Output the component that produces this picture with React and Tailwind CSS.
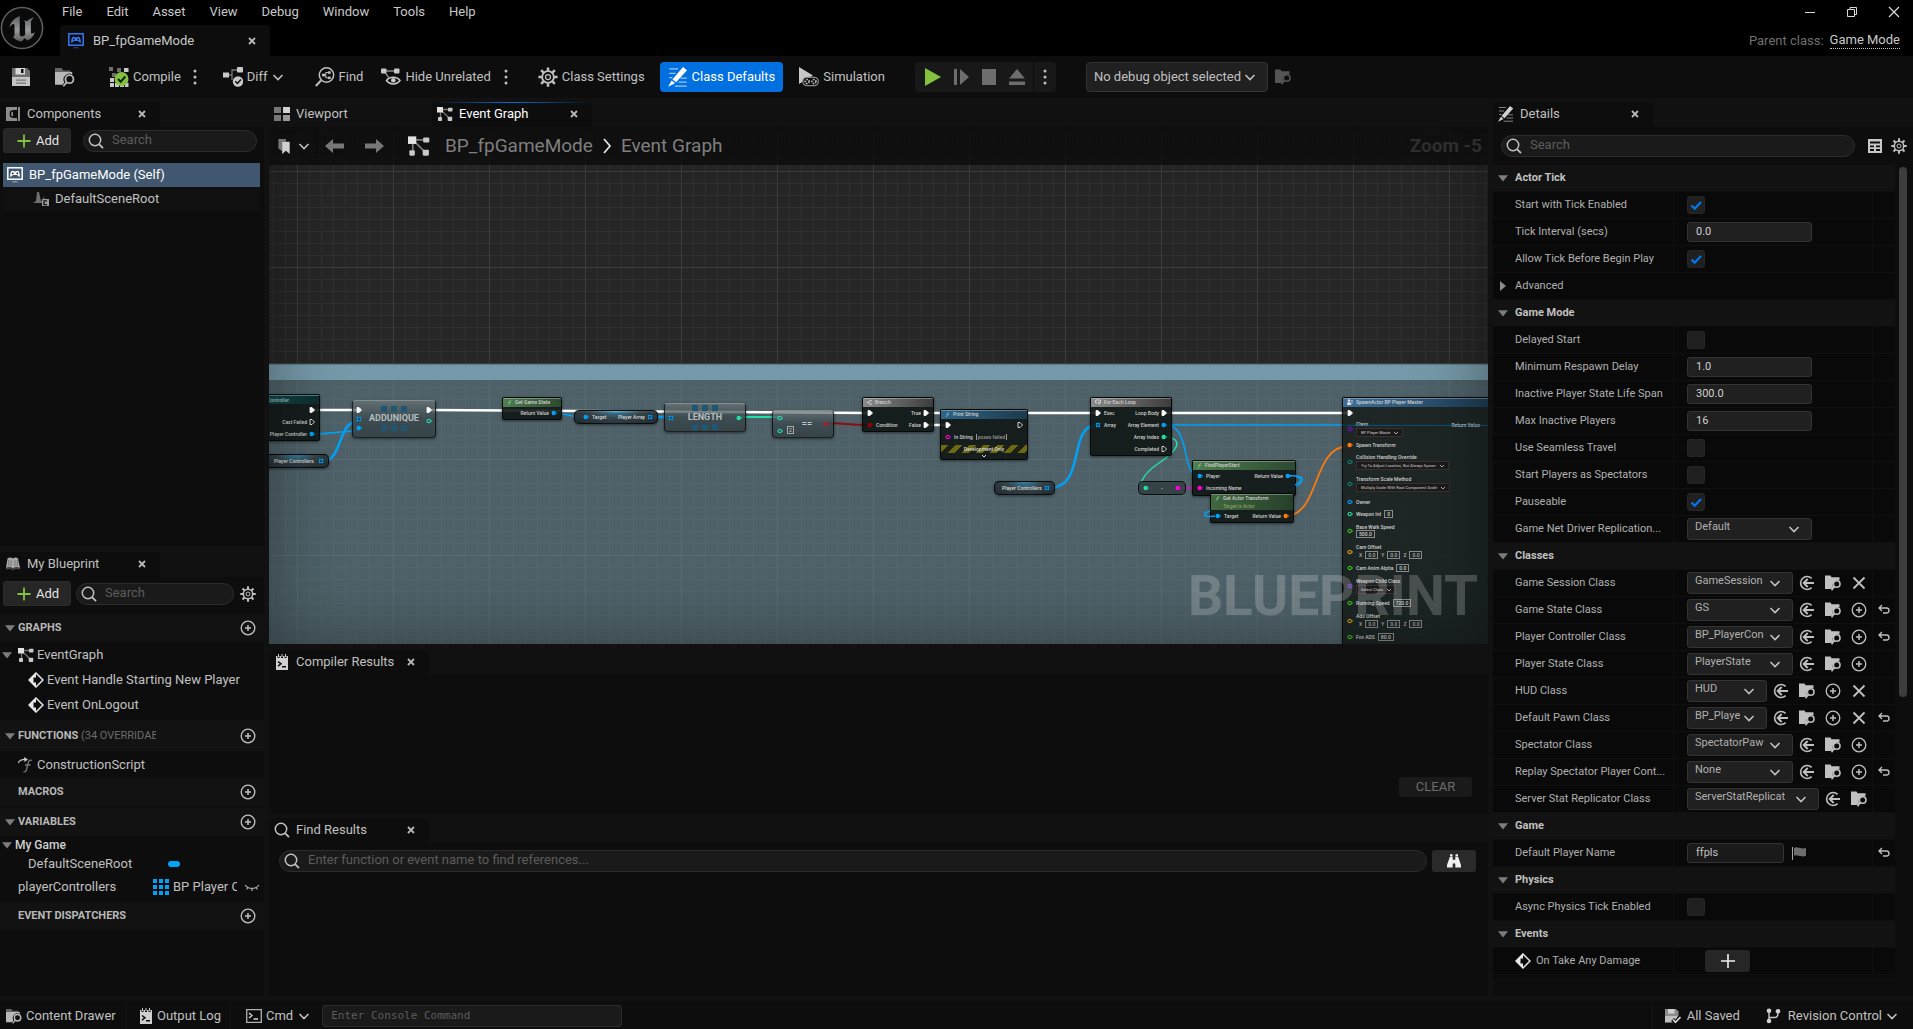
import React from "react";

/* ---------- icons ---------- */

const Svg = ({ s = 16, vb = "0 0 16 16", className = "", children }) => (
  <svg width={s} height={s} viewBox={vb} fill="none" className={`shrink-0 ${className}`} aria-hidden="true">
    {children}
  </svg>
);

const Chevron = ({ className = "text-[#c0c0c0]" }) => (
  <Svg s={12} vb="0 0 12 12" className={className}>
    <path d="M1.5 4l4.500 4.500L10.500 4" stroke="currentColor" strokeWidth="1.600" />
  </Svg>
);

const CloseX = () => (
  <Svg s={8} vb="0 0 8 8" className="text-[#b8b8b8]">
    <path d="M1 1l6 6M7 1L1 7" stroke="currentColor" strokeWidth="1.800" />
  </Svg>
);

const SearchIcon = ({ s = 16 }) => (
  <Svg s={s} className="text-[#c0c0c0]">
    <circle cx="7" cy="7" r="5.700" stroke="currentColor" strokeWidth="1.500" />
    <path d="M11 11.200l4 4" stroke="currentColor" strokeWidth="1.700" />
  </Svg>
);

const GearIcon = ({ s = 16 }) => (
  <Svg s={s} className="text-[#c0c0c0]">
    <circle cx="8" cy="8" r="4.700" stroke="currentColor" strokeWidth="1.500" />
    <circle cx="8" cy="8" r="2" stroke="currentColor" strokeWidth="1" />
    <g stroke="currentColor" strokeWidth="2">
      <path d="M8 .3v2.800M8 12.900v2.800M.3 8h2.800M12.900 8h2.800M2.500 2.500l2 2M11.500 11.500l2 2M13.500 2.500l-2 2M4.500 11.500l-2 2" />
    </g>
  </Svg>
);

const PlusCircle = ({ s = 16 }) => (
  <Svg s={s} className="text-[#c0c0c0]">
    <circle cx="8" cy="8" r="6.800" stroke="currentColor" strokeWidth="1.300" />
    <path d="M8 5v6M5 8h6" stroke="currentColor" strokeWidth="1.500" />
  </Svg>
);

const GamepadMonitor = ({ className }) => (
  <Svg s={16} className={className}>
    <rect x=".8" y=".8" width="14.400" height="11.400" stroke="currentColor" strokeWidth="1.500" />
    <path d="M3.200 9.800c0-3.600.6-6 2.100-6 .8 0 1 .7 2.700.7s1.900-.7 2.700-.7c1.500 0 2.100 2.400 2.100 6-1.200.4-1.700-1.600-2.800-1.900H6c-1.100.3-1.600 2.300-2.800 1.900z" fill="currentColor" />
    <circle cx="5.700" cy="6.300" r=".9" fill="#10131a" />
    <circle cx="10.300" cy="6.300" r=".9" fill="#10131a" />
    <path d="M4.500 15.200c1-1.400 6-1.400 7 0z" fill="currentColor" opacity=".55" />
  </Svg>
);

const BrowseIcon = ({ s = 18, className = "text-[#b8b8b8]" }) => (
  <Svg s={s} vb="0 0 18 18" className={className}>
    <path d="M0 1h6l1.500 2.200H14V5H0z" fill="currentColor" opacity=".5" />
    <path d="M0 4.500h15.500v2.300a5.200 5.200 0 0 0-7.200 7L7 16H0z" fill="currentColor" />
    <circle cx="13" cy="11" r="3.600" stroke="currentColor" strokeWidth="1.600" />
    <path d="M10.600 13.600L7.500 17.300" stroke="currentColor" strokeWidth="1.600" />
  </Svg>
);

const PickIcon = ({ className = "text-[#c0c0c0]" }) => (
  <Svg s={16} className={className}>
    <path d="M0 .5h5.500l1 1.800h8v3.200a5 5 0 0 0-6.200 7L7.500 13.500 5.500 14H0z" fill="currentColor" />
    <circle cx="11.700" cy="9" r="3.300" stroke="currentColor" strokeWidth="1.600" />
    <path d="M9.500 11.500L6.500 15.200" stroke="currentColor" strokeWidth="1.600" />
  </Svg>
);

const UseIcon = () => (
  <Svg s={16} className="text-[#c0c0c0]">
    <path d="M12.600 3.300A6.500 6.500 0 1 0 12.600 12.700" stroke="currentColor" strokeWidth="1.600" />
    <path d="M4.500 8H15M8.700 4L4.700 8l4 4" stroke="currentColor" strokeWidth="1.900" />
  </Svg>
);

const BigX = () => (
  <Svg s={16} className="text-[#c0c0c0]">
    <path d="M2.500 2.500l11 11M13.500 2.500l-11 11" stroke="currentColor" strokeWidth="1.800" />
  </Svg>
);

const UndoIcon = () => (
  <Svg s={12} vb="0 0 12 12" className="text-[#c0c0c0]">
    <path d="M1 4h7.500a2.500 2.500 0 0 1 0 5H5M4 1L1 4l3 3" stroke="currentColor" strokeWidth="1.300" />
  </Svg>
);

const GraphIcon = ({ s = 16 }) => (
  <Svg s={s} className="text-[#c8c8c8]">
    <path d="M5 3.500h6M3.500 6v5M5 5l6.500 6.500" stroke="#777" strokeWidth="1.300" />
    <rect x="0" y="1" width="6" height="5.500" fill="#e2e2e2" />
    <rect x="11" y="1.800" width="4.500" height="3.700" rx=".8" fill="currentColor" />
    <rect x="1" y="11" width="4" height="4" rx=".8" fill="currentColor" />
    <rect x="10.700" y="10.700" width="4.500" height="4.300" rx=".8" fill="currentColor" />
  </Svg>
);

const PencilLines = ({ s = 16, className = "text-[#d0d0d0]" }) => (
  <Svg s={s} className={className}>
    <path d="M1 1.500h7M1 5h5M1 8.500h2.500M10 8.800h5M8.500 12h6.500M5.500 15.200H15" stroke="currentColor" strokeWidth="1" opacity=".6" />
    <path d="M12 0l3.200 2.500L6.500 12.200l-3-2.300zM2.900 10.800l2.700 2.100L0 15.800z" fill="currentColor" />
  </Svg>
);

const NotepadIcon = () => (
  <Svg s={16} className="text-[#d0d0d0]">
    <path d="M2 2h12v14H2z" fill="currentColor" />
    <path d="M4.500 0v4M8 0v4M11.500 0v4" stroke="#0d0d0d" strokeWidth="2" />
    <path d="M4.500 0v3M8 0v3M11.500 0v3" stroke="currentColor" strokeWidth="1" />
    <path d="M4 7.500l3 2.300-3 2.400M8 12.700h4" stroke="#0d0d0d" strokeWidth="1.500" />
  </Svg>
);

const EventDiamond = () => (
  <Svg s={16} className="text-[#e8e8e8]">
    <path d="M8 1l7 7-7 7-7-7z" stroke="currentColor" strokeWidth="1.500" />
    <path d="M8 1v4.500H5.500v5H8V15L1 8z" fill="currentColor" />
    <path d="M8 5.500l3 2.500-3 2.500z" fill="#0d0d0d" />
  </Svg>
);

const Tri = ({ open = true }) =>
  open ? (
    <Svg s={10} vb="0 0 10 10"><path d="M0 2.200h10L5 8.500z" fill="#7c7c7c" /></Svg>
  ) : (
    <Svg s={10} vb="0 0 10 10"><path d="M2 0v10l6-5z" fill="#8c8c8c" /></Svg>
  );

const Dots = () => (
  <Svg s={16} className="text-[#c0c0c0]">
    <circle cx="8" cy="2" r="1.500" fill="currentColor" />
    <circle cx="8" cy="8" r="1.500" fill="currentColor" />
    <circle cx="8" cy="14" r="1.500" fill="currentColor" />
  </Svg>
);

const LogoMark = () => (
  <Svg s={44} vb="0 0 44 44">
    <defs>
      <linearGradient id="ueLogo" x1="0" y1="0" x2="0" y2="1">
        <stop offset="0" stopColor="#5c5f62" />
        <stop offset=".55" stopColor="#9a9a9a" />
        <stop offset="1" stopColor="#5a5a5a" />
      </linearGradient>
    </defs>
    <circle cx="22" cy="22" r="20.600" fill="#0a0a0a" stroke="#5e6160" strokeWidth="1.500" />
    <path
      d="M20 10c-5 1.500-9.500 6-10.500 11.500 1.600-2.400 3.200-3.600 4.200-3.400.8.200.8 1 .8 2v8.400c0 1.700-.6 2.200-1.700 2 1.800 2.800 5 4.600 8.700 4.900l3.200-3.200 2.800 2.300c4-1.700 6.600-5 7.300-8.600-1.300 1.300-2.600 2-3.300 1.600-.6-.3-.6-1-.6-1.800V15.500c1-1.700 2.300-3.200 3.600-4.200-2.800.5-5.500 2-7.600 4-1-.7-2.200-1-3.300-.9 1.200.7 1.500 1.500 1.500 2.800v11.600c-.8 1-2 1.600-3.200 1.600-1.300 0-2.200-.6-2.200-1.900V14.300c0-2 .1-3 .3-4.300z"
      fill="url(#ueLogo)"
    />
  </Svg>
);

const SaveIcon = () => (
  <Svg s={18} vb="0 0 18 18" className="text-[#c0c0c0]">
    <path d="M0 0h15l3 3v6H0z" fill="currentColor" opacity=".55" />
    <path d="M3.500 0h9.500v6.500H3.500z" fill="#d8d8d8" />
    <path d="M9 1h2.500v4H9z" fill="#0d0d0d" />
    <path d="M0 9h18v9H0z" fill="#c4c4c4" />
    <path d="M4 11.500h10v1.200H4zM4 14.500h10v1.200H4z" fill="#777" />
  </Svg>
);

const CompileIcon = () => (
  <Svg s={20} vb="0 0 20 20">
    <g fill="#6d6d6d">
      <rect width="4" height="4" /><rect x="8" width="4" height="4" y="1" /><rect x="3" y="6" width="4" height="4" />
    </g>
    <g fill="#c8c8c8">
      <rect x="15" y="1" width="4.500" height="4" /><rect x="1" y="11" width="4" height="4" /><rect x="1" y="16" width="4" height="4" />
      <rect x="6" y="16" width="4" height="4" /><rect x="11" y="16" width="4" height="4" /><rect x="16" y="16" width="3.500" height="4" />
    </g>
    <circle cx="12.500" cy="12" r="7" fill="#83c13f" />
    <path d="M9 12l2.700 2.700L16.300 9.500" stroke="#10200a" strokeWidth="2" />
  </Svg>
);

const DiffIcon = () => (
  <Svg s={20} vb="0 0 20 20" className="text-[#c8c8c8]">
    <path d="M5 8h4V3h6M9 8v5" stroke="#777" strokeWidth="1.300" />
    <rect x="0" y="5.500" width="6" height="5" fill="currentColor" />
    <rect x="14" y="0" width="6" height="5.500" rx="1" fill="currentColor" />
    <circle cx="15" cy="14.500" r="5.200" fill="currentColor" />
    <path d="M12.300 14.300l2.100 2.200 3.600-4" stroke="#0d0d0d" strokeWidth="1.500" />
  </Svg>
);

const FindIcon = () => (
  <Svg s={20} vb="0 0 20 20" className="text-[#c0c0c0]">
    <circle cx="11.500" cy="8" r="7.200" stroke="currentColor" strokeWidth="1.500" />
    <path d="M6 13.500L.8 19" stroke="currentColor" strokeWidth="2" />
    <path d="M8.500 8h2.300V5.500h3M10.800 8v2.800h3" stroke="currentColor" strokeWidth="1" />
    <rect x="7" y="6.700" width="3" height="2.700" fill="currentColor" />
    <rect x="13" y="4.300" width="2.700" height="2.500" fill="currentColor" />
    <rect x="13" y="9.600" width="2.700" height="2.500" fill="currentColor" />
  </Svg>
);

const HideIcon = () => (
  <Svg s={20} vb="0 0 20 20" className="text-[#c8c8c8]">
    <path d="M4 4h11M3 4l5 7" stroke="#888" strokeWidth="1.300" />
    <rect x="0" y="1.500" width="5.500" height="5" rx="1" fill="currentColor" />
    <rect x="13" y="1.500" width="5.500" height="5" rx="1" fill="currentColor" />
    <path d="M5.500 13.500c3-4.500 10.500-4.500 13.500 0-3 4.500-10.500 4.500-13.500 0z" fill="#0d0d0d" stroke="currentColor" strokeWidth="1.500" />
    <circle cx="12.300" cy="13.300" r="2.300" fill="currentColor" />
  </Svg>
);

const SimIcon = () => (
  <Svg s={20} vb="0 0 20 20" className="text-[#c8c8c8]">
    <path d="M0 0l14 8.500L0 17z" fill="currentColor" />
    <rect x="3.800" y="10.300" width="15.600" height="8.400" rx="4.200" fill="#0d0d0d" stroke="#888" strokeWidth="1.200" />
    <circle cx="8.200" cy="14.500" r="2" stroke="currentColor" strokeWidth="1.500" strokeDasharray="1.500 1" />
    <circle cx="15" cy="14.500" r="2" stroke="currentColor" strokeWidth="1.500" strokeDasharray="1.500 1" />
  </Svg>
);

/* ---------- shared controls ---------- */

const Tab = ({ icon, label, active = false, close = true, className = "w-40" }) => (
  <div className={`relative flex h-[25px] items-center rounded-t-[3px] pb-0.5 pl-[5px] pr-[14px] ${className}`}>
    {active && <div className="absolute inset-x-0 top-0 h-px bg-linear-to-r from-transparent via-[#0070e0] to-transparent" />}
    <span className="flex w-[22px] shrink-0">{icon}</span>
    <span className={`flex-1 whitespace-nowrap text-[13px] leading-4 ${active ? "text-white" : "text-[#c0c0c0]"}`}>{label}</span>
    {close && <button type="button" aria-label={`Close ${label}`}><CloseX /></button>}
  </div>
);

const AddButton = () => (
  <button type="button" className="flex h-[25px] w-[68px] shrink-0 items-center gap-[5px] rounded-[3px] border border-[#2b2b2b] bg-[#262626] pl-[13px] text-[13px] text-[#e4e4e4]">
    <Svg s={14} vb="0 0 14 14"><path d="M7 .5v13M.5 7h13" stroke="#83c13f" strokeWidth="1.800" /></Svg>
    Add
  </button>
);

const SearchBox = ({ label, placeholder = "Search", className = "" }) => (
  <label className={`flex h-[22px] min-w-0 items-center gap-2 rounded-full border border-[#2c2c2c] bg-[#1a1a1a] pl-1 ${className}`}>
    <SearchIcon />
    <input aria-label={label} placeholder={placeholder} className="w-full min-w-0 bg-transparent pb-0.5 text-[13px] leading-4 outline-none placeholder:text-[#5c5c5c]" />
  </label>
);

/* ---------- title bar and toolbar ---------- */

const MENU = ["File", "Edit", "Asset", "View", "Debug", "Window", "Tools", "Help"];

const TitleBar = () => (
  <header className="flex h-14 shrink-0 bg-black">
    <div className="flex w-[60px] items-center"><LogoMark /></div>
    <div className="flex flex-1 flex-col justify-between">
      <nav className="flex h-6 items-center gap-6 pl-0.5">
        {MENU.map((m) => <button key={m} type="button" className="text-[13px] leading-4 text-[#c8c8c8]">{m}</button>)}
      </nav>
      <div className="flex h-[31px] w-[210px] items-center rounded-t-[4px] bg-[#0d0d0d] pl-2 pr-[14px]">
        <GamepadMonitor className="text-[#3478f6]" />
        <span className="ml-[9px] flex-1 text-[13px] leading-4 text-[#c8c8c8]">BP_fpGameMode</span>
        <button type="button" aria-label="Close BP_fpGameMode"><CloseX /></button>
      </div>
    </div>
    <div className="flex flex-col items-end justify-between pb-[7px] pr-[13px]">
      <div className="flex h-6 items-center gap-[30px] text-[#d8d8d8]">
        <button type="button" aria-label="Minimize"><Svg s={12} vb="0 0 12 12"><path d="M1 6.500h10" stroke="currentColor" strokeWidth="1" /></Svg></button>
        <button type="button" aria-label="Restore"><Svg s={12} vb="0 0 12 12"><path d="M1.500 3.500h7v7h-7zM4 3V1.500h6.500v7H9" stroke="currentColor" strokeWidth="1" /></Svg></button>
        <button type="button" aria-label="Close"><Svg s={12} vb="0 0 12 12"><path d="M1 1l10 10M11 1L1 11" stroke="currentColor" strokeWidth="1.300" /></Svg></button>
      </div>
      <div className="flex items-center gap-1.5 text-[13px] leading-4 text-[#6f6f6f]">
        <span>Parent class:</span>
        <a href="#game-mode" className="border-b border-dotted border-[#c8c8c8] text-[#c8c8c8]">Game Mode</a>
      </div>
    </div>
  </header>
);

const Tool = ({ icon, label, className = "", children }) => (
  <button type="button" className={`flex h-[30px] items-center gap-1 whitespace-nowrap text-[13px] text-[#c0c0c0] ${className}`}>
    {icon}
    {label}
    {children}
  </button>
);

const Toolbar = () => (
  <div className="flex h-[42px] shrink-0 items-center bg-[#0d0d0d] pl-3">
    <button type="button" aria-label="Save"><SaveIcon /></button>
    <button type="button" aria-label="Browse" className="ml-[25px]"><BrowseIcon s={20} /></button>
    <Tool icon={<CompileIcon />} label="Compile" className="ml-[34px]" />
    <button type="button" aria-label="Compile options" className="ml-1.5"><Dots /></button>
    <Tool icon={<DiffIcon />} label="Diff" className="ml-5"><Chevron /></Tool>
    <Tool icon={<FindIcon />} label="Find" className="ml-[31px]" />
    <Tool icon={<HideIcon />} label="Hide Unrelated" className="ml-[18px]" />
    <button type="button" aria-label="Hide unrelated options" className="ml-[7px]"><Dots /></button>
    <Tool icon={<GearIcon s={20} />} label="Class Settings" className="ml-6" />
    <Tool icon={<PencilLines s={20} className="text-white" />} label="Class Defaults" className="ml-[15px] rounded-[4px] bg-[#0070e0] px-2 text-white" />
    <Tool icon={<SimIcon />} label="Simulation" className="ml-4" />
    <div className="ml-[30px] flex h-[30px] items-center rounded-[4px] bg-[#181818] pl-[9px]">
      <button type="button" aria-label="Play"><Svg s={18} vb="0 0 18 18"><path d="M1 0l16 9-16 9z" fill="#83c13f" /></Svg></button>
      <button type="button" aria-label="Step" className="ml-3"><Svg s={16} className="text-[#6d6d6d]"><path d="M0 0h3v16H0zM6 0l9 8-9 8z" fill="currentColor" /></Svg></button>
      <button type="button" aria-label="Stop" className="ml-[11px]"><Svg s={16} className="text-[#6d6d6d]"><path d="M1 0h14v16H1z" fill="currentColor" /></Svg></button>
      <button type="button" aria-label="Eject" className="ml-3"><Svg s={16} className="text-[#6d6d6d]"><path d="M8 0l8 9.500H0zM0 12.500h16V16H0z" fill="currentColor" /></Svg></button>
      <button type="button" aria-label="Play options" className="ml-2 flex h-[30px] w-[23px] items-center justify-center border-l border-[#0d0d0d]"><Dots /></button>
    </div>
    <label className="ml-[30px] flex h-[30px] items-center rounded-[4px] border border-[#333] bg-[#202020] pr-[11px]">
      <select aria-label="Debug object" className="h-full appearance-none bg-transparent pl-[7px] pr-0.5 text-[13px] text-[#c0c0c0] outline-none">
        <option>No debug object selected</option>
      </select>
      <Chevron />
    </label>
    <button type="button" aria-label="Browse debug object" className="ml-[7px]"><PickIcon className="text-[#555]" /></button>
  </div>
);

/* ---------- left column ---------- */

const ComponentsPanel = () => (
  <section className="flex min-h-0 flex-[444] flex-col pt-1">
    <Tab className="w-40 bg-[#0d0d0d]" label="Components"
      icon={<Svg s={16} className="text-[#8c8c8c]"><path d="M1 1h11v3H8v8h4v3H1zM13 1h2v14h-2z" fill="currentColor" /><path d="M10 5H7.500a2 2 0 0 0-2 2v2a2 2 0 0 0 2 2H10" stroke="#0d0d0d" strokeWidth="1.600" /></Svg>} />
    <div className="flex-1 bg-[#0d0d0d] px-[3px]">
      <div className="flex items-center gap-3 pt-px">
        <AddButton />
        <SearchBox label="Search components" className="mr-1 flex-1" />
      </div>
      <ul className="mt-[10px] text-[13px] leading-4">
        <li className="mr-px flex h-6 items-center gap-1.5 bg-[#40576f] pl-1 text-white"><GamepadMonitor className="text-white" />BP_fpGameMode (Self)</li>
        <li className="mr-px flex h-6 items-center gap-1.5 bg-[#101010] pl-[30px] text-[#c0c0c0]">
          <Svg s={16}><path d="M4 1h2l2 9h2l1-5 1 5v2H0l3-2z" fill="#6f6f6f" /><path d="M9 8h7v7H9z" fill="#9a9a9a" /><path d="M14 9.800h-3v3.800h3" stroke="#101010" strokeWidth="1.200" /></Svg>
          DefaultSceneRoot
        </li>
      </ul>
    </div>
  </section>
);

const SectionHead = ({ label, note, open = true, tall = false }) => (
  <div className={`flex items-center bg-[#121212] pl-[5px] pr-2 text-[11px] leading-4 ${tall ? "h-[31px]" : "h-7"}`}>
    <span className="flex w-[13px]">{open && <Tri />}</span>
    <h3 className="w-[138px] overflow-hidden whitespace-nowrap font-bold text-[#b8b8b8]">
      {label}{note && <span className="font-normal text-[#6c6c6c]"> {note}</span>}
    </h3>
    <button type="button" aria-label={`Add to ${label}`} className="ml-auto"><PlusCircle /></button>
  </div>
);

const MyBlueprintPanel = () => (
  <section className="flex min-h-0 flex-[443] flex-col pt-1.5">
    <Tab className="w-40 bg-[#0d0d0d]" label="My Blueprint"
      icon={<Svg s={16}><path d="M2.500 2.500c2-1.500 4-1 5.500 0 1.500-1 3.500-1.500 5 0L15 12c-2.500-1.300-5-1-7 .3C6 11 3.500 10.700 1 12z" fill="#a8a8a8" /><path d="M1 13c2.500-1 5-.8 7 .5 2-1.300 4.500-1.500 7-.5" stroke="#444" strokeWidth="1.500" /><path d="M3.700 4v6M6 4v6M10 4v6M12.300 4v6" stroke="#666" strokeWidth=".7" /></Svg>} />
    <div className="flex-1 overflow-hidden bg-[#0d0d0d]">
      <div className="mb-2 flex items-center gap-[5px] pl-[3px] pr-2 pt-1">
        <AddButton />
        <SearchBox label="Search blueprint" className="flex-1" />
        <button type="button" aria-label="Blueprint view options" className="ml-px"><GearIcon /></button>
      </div>
      <SectionHead label="GRAPHS" />
      <ul className="pb-[3px] text-[13px] leading-4 text-[#c0c0c0]">
        <li className="flex h-[25px] items-center pl-0.5"><span className="w-4"><Tri /></span><GraphIcon /><span className="ml-[3px]">EventGraph</span></li>
        <li className="flex h-[25px] items-center gap-[3px] pl-7"><EventDiamond />Event Handle Starting New Player</li>
        <li className="flex h-[25px] items-center gap-[3px] pl-7"><EventDiamond />Event OnLogout</li>
      </ul>
      <SectionHead label="FUNCTIONS" note="(34 OVERRIDABLE)" tall />
      <div className="flex h-[27px] items-center gap-[3px] pl-[18px] text-[13px] leading-4 text-[#c0c0c0]">
        <Svg s={16}><path d="M0 6c2-3 4-4 8-3.500" stroke="#c8c8c8" strokeWidth="1.200" /><path d="M6 0l4 2.500L6.500 5z" fill="#c8c8c8" /><path d="M14 3.500c-2-1-3.200 0-3.700 2L8.500 12.500c-.6 2-1.500 2.700-3 2.200M7 8h5.500" stroke="#777" strokeWidth="1.300" /></Svg>
        ConstructionScript
      </div>
      <SectionHead label="MACROS" open={false} />
      <div className="h-0.5" />
      <SectionHead label="VARIABLES" />
      <div className="flex h-[18px] items-center gap-[3px] pl-0.5 text-[12px] font-medium leading-4 text-[#d0d0d0]"><Tri />My Game</div>
      <ul className="pb-px text-[13px] leading-4 text-[#c0c0c0]">
        <li className="flex h-[19px] items-center pl-7"><span className="w-[140px]">DefaultSceneRoot</span><span className="h-1.5 w-3 rounded-full bg-[#00a2f8]" /></li>
        <li className="flex h-7 items-center pl-[18px] pr-1">
          <span className="w-[135px]">playerControllers</span>
          <Svg s={16}><path d="M0 0h4v4H0zM6 0h4v4H6zM12 0h4v4h-4zM0 6h4v4H0zM6 6h4v4H6zM12 6h4v4h-4zM0 12h4v4H0zM6 12h4v4H6zM12 12h4v4h-4z" fill="#00a2f8" /></Svg>
          <span className="ml-1 w-16 overflow-hidden whitespace-nowrap">BP Player Controller</span>
          <Svg s={16} className="ml-auto"><path d="M1 6c3 4.500 11 4.500 14 0M4 8.500l-1.500 2M8 9.500V12M12 8.500l1.500 2" stroke="#b0b0b0" strokeWidth="1.200" /></Svg>
        </li>
      </ul>
      <SectionHead label="EVENT DISPATCHERS" open={false} />
    </div>
  </section>
);

/* ---------- graph ---------- */

const BLUE = "#00a2f8";
const GREEN = "#20e0a8";
const PINK = "#ff00d4";
const ORANGE = "#ff7a0a";

const Pin = ({ kind = "dot", color = BLUE }) => {
  if (kind === "exec" || kind === "execOff")
    return <Svg s={6} vb="0 0 6 6"><path d="M1 .5h2L5.500 3 3 5.500H1z" fill={kind === "exec" ? "#fff" : "none"} stroke="#fff" strokeWidth=".8" /></Svg>;
  if (kind === "array")
    return <Svg s={6} vb="0 0 6 6"><path d="M1 1h4v4H1z" fill="#0a3f5c" /><path d="M1 1h1v1H1zM2.500 1h1v1h-1zM4 1h1v1H4zM1 2.500h1v1H1zM4 2.500h1v1H4zM1 4h1v1H1zM2.500 4h1v1h-1zM4 4h1v1H4z" fill={color} stroke={color} strokeWidth=".3" /></Svg>;
  if (kind === "ring")
    return <Svg s={6} vb="0 0 6 6"><circle cx="2.700" cy="3" r="1.700" stroke={color} strokeWidth="1.100" /><path d="M5 2l1 1-1 1z" fill={color} /></Svg>;
  return <Svg s={6} vb="0 0 6 6"><circle cx="2.700" cy="3" r="2.200" fill={color} /><path d="M5 2l1 1-1 1z" fill={color} /></Svg>;
};

const Pins = ({ l, lp, lc, r, rp, rc }) => (
  <div className="flex h-3 items-center justify-between px-1">
    <span className="flex items-center gap-[3px]">{lp && <Pin kind={lp} color={lc} />}{l}</span>
    <span className="flex items-center gap-[2px]">{r}{rp && <Pin kind={rp} color={rc} />}</span>
  </div>
);

/* Node positions are graph coordinates, given as style because they are data. */
const Node = ({ x, y, w, h, head, headClass = "", title, className = "bg-[#111615]/90", children }) => (
  <div
    style={{ left: x, top: y, width: w, height: h }}
    className={`absolute overflow-hidden whitespace-nowrap rounded-[2px] border border-black/70 text-[5px] font-medium leading-[6px] text-[#d0d0d0] shadow-[0_1px_3px_rgba(0,0,0,.5)] ${className}`}
  >
    {title && <div className={`flex h-[9px] items-center gap-[3px] border-t border-white/30 px-1 pb-0.5 ${headClass}`}>{head}{title}</div>}
    {children}
  </div>
);

const Pill = ({ x, y, w, children }) => (
  <div
    style={{ left: x, top: y, width: w }}
    className="absolute flex h-[14px] items-center justify-between whitespace-nowrap rounded-[5px] border border-black/80 bg-[radial-gradient(ellipse_at_50%_0%,rgba(40,140,190,.7),rgba(50,62,66,.9)_45%,rgba(28,36,38,.9)_100%)] px-1 text-[5px] font-medium leading-[6px] text-[#d8d8d8] shadow-[0_1px_3px_rgba(0,0,0,.5)]"
  >
    {children}
  </div>
);

const Compact = ({ x, y, w, h, children }) => (
  <div
    style={{ left: x, top: y, width: w, height: h }}
    className="absolute rounded-[4px] border border-black/70 border-t-[#9a9f9f]/80 bg-linear-to-b from-[#6a7578]/70 via-[#39474b]/80 to-[#344145]/90 shadow-[0_1px_3px_rgba(0,0,0,.5)]"
  >
    {children}
  </div>
);

const ArrayDeco = () => (
  <svg width="28" height="28" viewBox="0 0 28 28" className="absolute" aria-hidden="true">
    <path d="M1 1h6v6H1zM11 1h6v6h-6zM21 1h6v6h-6zM1 20h6v6H1zM11 20h6v6h-6zM21 20h6v6h-6z" fill="#1f5674" />
  </svg>
);

const FIcon = ({ color = "#8fd08f" }) => (
  <Svg s={5} vb="0 0 6 6"><path d="M5 .7C3.500 0 3.200 1.500 3 3S2 6 .8 5.200M1.500 2.800h3" stroke={color} strokeWidth=".9" /></Svg>
);

const Wires = () => (
  <svg className="absolute inset-0 h-full w-full" fill="none" aria-hidden="true">
    <g stroke="#fff" strokeWidth="2.500">
      <path d="M44 283H88" />
      <path d="M160 283C300 283 440 286 598 286" />
      <path d="M658 286H826" />
      <path d="M656 298H676" />
      <path d="M897 286H1078" />
    </g>
    <g stroke={BLUE} strokeWidth="1.600">
      <path d="M46 307C62 307 70 304 90 304" />
      <path d="M285 286C296 286 302 290 312 290" />
      <path d="M383 290H402" strokeWidth="2.500" />
      <path d="M897 298H1219" />
      <path d="M897 298C922 298 912 349 930 349" />
      <path d="M1018 349C1040 348 1038 359 1008 366L972 376C950 382 950 389 946 389" />
    </g>
    <g stroke={BLUE} strokeWidth="2.500">
      <path d="M54 334C74 334 68 294 90 294" />
      <path d="M780 361C818 361 798 298 828 298" />
    </g>
    <path d="M468 290H510" stroke={GREEN} strokeWidth="2" />
    <path d="M557 296C575 296 580 298 600 298" stroke="#8f0c12" strokeWidth="2" />
    <path d="M897 310C916 312 908 324 890 336S868 361 876 361" stroke={GREEN} strokeWidth="1.500" />
    <path d="M908 361H930" stroke={PINK} strokeWidth="1.500" />
    <path d="M1016 389C1052 389 1042 319 1080 319" stroke={ORANGE} strokeWidth="1.800" />
  </svg>
);

/* Hooked ends of the wires that run out past the sides of the nodes. */
const WireHooks = () => (
  <svg className="pointer-events-none absolute inset-0 h-full w-full" fill="none" stroke={BLUE} strokeWidth="1.500" aria-hidden="true">
    <path d="M1018 349C1030 348 1036 351 1032 354L1026 358" />
    <path d="M941 384C934 386 932 391 946 389" />
  </svg>
);

const Field = ({ children }) => <span className="border border-[#8a8a8a] px-[2px] leading-[6px]">{children}</span>;

const SpawnRow = ({ top, pin, color, label, extra }) => (
  <div style={{ top }} className="absolute left-1 flex items-center gap-[3px]">
    <Pin kind={pin} color={color} />{label}{extra}
  </div>
);

const Vec = () => (
  <span className="flex items-center gap-[3px] pl-[3px] text-[#b0b0b0]">X<Field>0.0</Field>Y<Field>0.0</Field>Z<Field>0.0</Field></span>
);

const Stack = ({ a, children }) => <span className="flex flex-col gap-px">{a}{children}</span>;

const Drop = ({ children }) => (
  <span className="flex h-[9px] items-center gap-1 self-start border border-[#3a3030] bg-[#1b1b1b] px-1 text-[4px] text-[#b0b0b0]">
    {children}
    <Svg s={4} vb="0 0 4 4"><path d="M0 1l2 2 2-2" stroke="#ccc" strokeWidth=".8" /></Svg>
  </span>
);

const BlueprintCanvas = () => (
  <div className="relative min-h-0 flex-1 overflow-hidden bg-[#262626] bg-[linear-gradient(to_right,#3d3d3d_1px,transparent_1px),linear-gradient(to_bottom,#3d3d3d_1px,transparent_1px),linear-gradient(to_right,#303030_1px,transparent_1px),linear-gradient(to_bottom,#303030_1px,transparent_1px)] bg-[size:96px_96px,96px_96px,12px_12px,12px_12px] bg-[position:28px_0,0_44px,4px_0,0_8px]">
    <div className="absolute inset-x-0 bottom-0 top-[237px] border-t border-[#5d7a86] bg-[rgba(118,155,170,.5)]">
      <div className="h-[15px] bg-[#7599a8]" />
    </div>
    <Wires />

    <Node x={-40} y={267} w={91} h={47}>
      <div className="flex h-[9px] items-center border-t border-[#3b8a8a] bg-linear-to-r from-[#126065] to-[#0e2c2e] pl-[37px] text-[#a8c0c0]">Controller</div>
      <Pins rp="exec" /><Pins r="Cast Failed" rp="execOff" /><Pins r="Player Controller" rp="dot" rc={BLUE} />
    </Node>
    <Pill x={-6} y={327} w={66}><span className="pl-1.5">Player Controllers</span><Pin kind="array" color={BLUE} /></Pill>

    <Compact x={83} y={273} w={84} h={38}>
      <div className="flex h-full items-stretch justify-between px-[3px] py-[6px]">
        <span className="flex flex-col justify-between"><Pin kind="exec" /><Pin kind="array" color={BLUE} /><Pin color={BLUE} /></span>
        <span className="relative flex items-center justify-center text-[9px] font-bold text-[#b4bcbf]"><ArrayDeco /><span className="relative">ADDUNIQUE</span></span>
        <span className="flex flex-col gap-[5px]"><Pin kind="exec" /><Pin kind="ring" color={GREEN} /></span>
      </div>
    </Compact>

    <Node x={233} y={270} w={60} h={23} title="Get Game State" head={<FIcon />} headClass="bg-linear-to-r from-[#4f7f50] to-[#2c4a30]">
      <Pins r="Return Value" rp="dot" rc={BLUE} />
    </Node>
    <Pill x={305} y={283} w={84}>
      <span className="flex items-center gap-[3px] pl-1"><Pin color={BLUE} />Target</span>
      <span className="flex items-center gap-[2px]">Player Array<Pin kind="array" color={BLUE} /></span>
    </Pill>
    <Compact x={395} y={276} w={82} h={29}>
      <div className="flex h-full items-center justify-between px-[3px]">
        <Pin kind="array" color={BLUE} />
        <span className="relative flex items-center justify-center text-[9px] font-bold text-[#b4bcbf]"><ArrayDeco /><span className="relative">LENGTH</span></span>
        <Pin color={GREEN} />
      </div>
    </Compact>
    <Compact x={503} y={283} w={62} h={28}>
      <div className="flex h-full items-center gap-1 px-1 text-[5px] leading-[6px] text-[#c8c8c8]">
        <span className="flex flex-col gap-[7px]"><Pin kind="ring" color={GREEN} /><Pin kind="ring" color={GREEN} /></span>
        <span className="mt-3 border border-[#a8a8a8] px-px">2</span>
        <span className="ml-1 text-[9px] font-medium">==</span>
        <span className="ml-auto flex"><Pin kind="ring" color="#c01820" /></span>
      </div>
    </Compact>

    <Node x={593} y={270} w={72} h={35} title="Branch" headClass="bg-linear-to-r from-[#8a8a8a] to-[#3c3c3c]" head={<Svg s={5} vb="0 0 6 6"><path d="M0 3h2l1-2h3M2 3l1 2h3" stroke="#ddd" strokeWidth="1" /></Svg>}>
      <Pins lp="exec" r="True" rp="exec" /><Pins l="Condition" lp="dot" lc="#9c0006" r="False" rp="exec" />
    </Node>

    <Node x={671} y={282} w={88} h={51} title="Print String" head={<FIcon color="#7fc4f0" />} headClass="bg-linear-to-r from-[#2e6487] to-[#1c3a4c]">
      <Pins lp="exec" rp="execOff" />
      <Pins lp="ring" lc={PINK} l={<>In String<span className="border-x border-[#999] px-px text-[#999]">poses failed</span></>} />
      <div className="mt-0.5 flex h-2 items-center justify-center bg-[repeating-linear-gradient(135deg,#6b6a12_0_5px,#1c1f14_5px_10px)] text-[#d8d8d8]">Development Only</div>
      <div className="flex justify-center pt-px"><Svg s={4} vb="0 0 4 4"><path d="M0 1l2 2 2-2" stroke="#ddd" /></Svg></div>
    </Node>

    <Pill x={725} y={354} w={61}><span className="pl-[3px]">Player Controllers</span><Pin kind="array" color={BLUE} /></Pill>

    <Node x={821} y={270} w={82} h={59} title="For Each Loop" headClass="bg-linear-to-r from-[#8a8a8a] to-[#3c3c3c]" head={<Svg s={6} vb="0 0 6 6"><path d="M2 4H.7V1h4.600v3H3.500M4.500 2.800L3 4l1.500 1.300" stroke="#ddd" strokeWidth=".9" /></Svg>}>
      <Pins l="Exec" lp="exec" r="Loop Body" rp="exec" />
      <Pins l="Array" lp="array" lc={BLUE} r="Array Element" rp="dot" rc={BLUE} />
      <Pins r="Array Index" rp="dot" rc={GREEN} />
      <Pins r="Completed" rp="execOff" />
    </Node>

    <div className="absolute left-[869px] top-[354px] flex h-[14px] w-12 items-center justify-between rounded-[5px] border border-black/80 bg-[#333f43]/90 px-1 text-[6px] text-[#aaa]">
      <Pin color={GREEN} />•<Pin color={PINK} />
    </div>

    <Node x={923} y={333} w={104} h={36} title="FindPlayerStart" head={<FIcon />} headClass="bg-linear-to-r from-[#4f7f50] to-[#2c4a30]">
      <Pins l="Player" lp="dot" lc={BLUE} r="Return Value" rp="dot" rc={BLUE} />
      <Pins l="Incoming Name" lp="dot" lc={PINK} />
    </Node>
    <Node x={941} y={366} w={84} h={30}>
      <div className="flex h-4 flex-col justify-between border-t border-white/30 bg-linear-to-r from-[#41683f] to-[#26402a] px-1 pb-px">
        <span className="flex items-center gap-[3px]"><FIcon />Get Actor Transform</span>
        <span className="pl-2 italic text-[#8aa06a]">Target is Actor</span>
      </div>
      <Pins l="Target" lp="dot" lc={BLUE} r="Return Value" rp="dot" rc={ORANGE} />
    </Node>
    <WireHooks />

    <Node x={1073} y={270} w={152} h={400} title="SpawnActor BP Player Master" headClass="bg-linear-to-r from-[#3d6f96] to-[#1d3a52]" className="bg-[#151b1a]/85" head={<Svg s={6} vb="0 0 6 6"><circle cx="2" cy="1.500" r="1.300" fill="#ddd" /><path d="M0 6c0-4 4-4 4 0zM4 2h2M5 1v4" fill="#ddd" stroke="#ddd" strokeWidth=".6" /></Svg>}>
      <SpawnRow top={12} pin="exec" />
      <SpawnRow top={23} pin="ring" color="#6a14c8" label={<Stack a="Class"><Drop>BP Player Maste</Drop></Stack>} />
      <div className="absolute right-[13px] top-6">Return Value</div>
      <SpawnRow top={44} pin="dot" color={ORANGE} label="Spawn Transform" />
      <SpawnRow top={56} pin="ring" color="#0f7f70" label={<Stack a="Collision Handling Override"><Drop>Try To Adjust Location, But Always Spawn</Drop></Stack>} />
      <SpawnRow top={78} pin="ring" color="#0f7f70" label={<Stack a="Transform Scale Method"><Drop>Multiply Scale With Root Component Scale</Drop></Stack>} />
      <SpawnRow top={101} pin="ring" color={BLUE} label="Owner" />
      <SpawnRow top={112} pin="ring" color={GREEN} label="Weapon Int" extra={<Field>0</Field>} />
      <SpawnRow top={126} pin="ring" color="#3cc814" label={<Stack a="Base Walk Speed"><span><Field>500.0</Field></span></Stack>} />
      <SpawnRow top={146} pin="ring" color="#d8a010" label={<Stack a="Cam Offset"><Vec /></Stack>} />
      <SpawnRow top={166} pin="ring" color="#3cc814" label="Cam Anim Alpha" extra={<Field>0.0</Field>} />
      <SpawnRow top={180} pin="ring" color="#7a2cd8" label={<Stack a="Weapon Child Class"><Drop>Select Class</Drop></Stack>} />
      <SpawnRow top={201} pin="ring" color="#3cc814" label="Running Speed" extra={<Field>720.0</Field>} />
      <SpawnRow top={215} pin="ring" color="#d8a010" label={<Stack a="Ads Offset"><Vec /></Stack>} />
      <SpawnRow top={235} pin="ring" color="#3cc814" label="Fov ADS" extra={<Field>80.0</Field>} />
    </Node>
    <div className="pointer-events-none absolute left-[1078px] right-0 top-[298px] h-px bg-[#0b5e8c]/60" />

    <div className="pointer-events-none absolute inset-0 shadow-[inset_0_0_70px_rgba(0,0,0,.4)]" />
    <div className="pointer-events-none absolute bottom-5 right-2.5 text-[55px] font-bold leading-[56px] text-white/20">BLUEPRINT</div>

    <div className="absolute inset-x-0 top-0 flex h-[38px] items-center bg-[#0b0b0b]/80">
      <button type="button" aria-label="Bookmarks" className="flex h-full w-12 items-center gap-1.5 border-r border-black/30 pl-2">
        <Svg s={15} vb="0 0 13 16"><path d="M0 0h8v3H4v10L0 10z" fill="#777" /><path d="M4 3h8v13l-4-3.500L4 16z" fill="#d0d0d0" /></Svg>
        <Chevron />
      </button>
      <button type="button" aria-label="Back" className="ml-2"><Svg s={20} vb="0 0 20 16"><path d="M8 1v4.500h11v5H8V15L0 8z" fill="#777" /></Svg></button>
      <button type="button" aria-label="Forward" className="ml-[19px]"><Svg s={20} vb="0 0 20 16"><path d="M12 1v4.500H1v5h11V15l8-7z" fill="#777" /></Svg></button>
      <span className="ml-6"><GraphIcon s={22} /></span>
      <span className="ml-[15px] text-[19px] leading-6 text-[#7f7f7f]">BP_fpGameMode</span>
      <Svg s={16} className="mx-1.5"><path d="M5 1l6 7-6 7" stroke="#e8e8e8" strokeWidth="1.700" /></Svg>
      <span className="text-[19px] leading-6 text-[#7f7f7f]">Event Graph</span>
      <span className="ml-auto pr-1.5 text-[19px] font-bold leading-6 text-[#2e2e2e]">Zoom -5</span>
    </div>
  </div>
);

const CenterColumn = () => (
  <main className="flex min-w-0 flex-1 flex-col">
    <section className="flex min-h-0 flex-[542] flex-col pt-1">
      <div className="flex">
        <Tab label="Viewport" close={false} className="w-[163px]"
          icon={<Svg s={16}><path d="M0 1h7v6H0zM0 9h7v6H0z" fill="#777" /><path d="M9 1h7v6H9z" fill="#d0d0d0" /><path d="M9 9h7v6H9z" fill="#999" /></Svg>} />
        <Tab label="Event Graph" active className="w-40 bg-[#0d0d0d]" icon={<GraphIcon />} />
      </div>
      <BlueprintCanvas />
    </section>
    <section className="flex min-h-0 flex-[163] flex-col pt-1.5">
      <Tab label="Compiler Results" className="w-40 bg-[#0d0d0d]" icon={<NotepadIcon />} />
      <div className="flex flex-1 items-end justify-end bg-[#0d0d0d] pb-4 pr-4">
        <button type="button" className="h-5 w-[73px] rounded-[3px] bg-[#1a1a1a] text-[13px] leading-4 text-[#6c6c6c]">CLEAR</button>
      </div>
    </section>
    <section className="flex min-h-0 flex-[177] flex-col pt-[5px]">
      <Tab label="Find Results" className="w-40 bg-[#0d0d0d]" icon={<SearchIcon />} />
      <div className="flex flex-1 items-start bg-[#0d0d0d] pl-2.5 pr-3 pt-[7px]">
        <SearchBox label="Find in blueprint" placeholder="Enter function or event name to find references..." className="flex-1" />
        <button type="button" aria-label="Search all blueprints" className="ml-[5px] flex h-[22px] w-11 items-center justify-center rounded-[3px] bg-[#2a2a2a]">
          <Svg s={14} vb="0 0 14 14"><path d="M3 .3h2.500V2H3zM8.500 .3H11V2H8.500z" fill="#f0f0f0" /><path d="M3 2.500h2.700v3.300h2.600V2.500H11l3 8.500v2.500H8.300V9.500H5.700v4H0V11z" fill="#f0f0f0" /></Svg>
        </button>
      </div>
    </section>
  </main>
);

/* ---------- details ---------- */

const ROWS = [
  { head: "Actor Tick" },
  { label: "Start with Tick Enabled", check: true },
  { label: "Tick Interval (secs)", text: "0.0" },
  { label: "Allow Tick Before Begin Play", check: true },
  { label: "Advanced", advanced: true },
  { head: "Game Mode" },
  { label: "Delayed Start", check: false },
  { label: "Minimum Respawn Delay", text: "1.0" },
  { label: "Inactive Player State Life Span", text: "300.0" },
  { label: "Max Inactive Players", text: "16" },
  { label: "Use Seamless Travel", check: false },
  { label: "Start Players as Spectators", check: false },
  { label: "Pauseable", check: true },
  { label: "Game Net Driver Replication...", select: "Default" },
  { head: "Classes" },
  { label: "Game Session Class", cls: "GameSession", tools: "upx" },
  { label: "Game State Class", cls: "GS", tools: "upa", undo: true },
  { label: "Player Controller Class", cls: "BP_PlayerCon", tools: "upa", undo: true },
  { label: "Player State Class", cls: "PlayerState", tools: "upa" },
  { label: "HUD Class", cls: "HUD", tools: "upax" },
  { label: "Default Pawn Class", cls: "BP_Player", tools: "upax", undo: true },
  { label: "Spectator Class", cls: "SpectatorPaw", tools: "upa" },
  { label: "Replay Spectator Player Cont...", cls: "None", tools: "upa", undo: true },
  { label: "Server Stat Replicator Class", cls: "ServerStatReplicat", tools: "up" },
  { head: "Game" },
  { label: "Default Player Name", name: "ffpls", undo: true },
  { head: "Physics" },
  { label: "Async Physics Tick Enabled", check: false },
  { head: "Events" },
  { label: "On Take Any Damage", event: true },
];

const TOOLS = {
  u: ["Use selected asset", UseIcon],
  p: ["Browse to asset", PickIcon],
  a: ["Create new", PlusCircle],
  x: ["Clear", BigX],
};

const Dropdown = ({ id, value, className }) => (
  <div className={`relative flex h-[22px] min-w-0 rounded-[3px] border border-[#333] bg-[#202020] ${className}`}>
    <select id={id} className="h-4 w-full appearance-none bg-transparent pl-[7px] pr-[26px] text-[11px] leading-4 text-[#b0b0b0] outline-none">
      <option>{value}</option>
    </select>
    <span className="pointer-events-none absolute inset-y-0 right-[11px] flex items-center"><Chevron /></span>
  </div>
);

const Value = ({ row, id }) => {
  if (row.check !== undefined)
    return (
      <span className="relative flex">
        <input id={id} type="checkbox" defaultChecked={row.check} className="peer h-[18px] w-[18px] appearance-none rounded-[3px] border border-[#262626] bg-[#202020]" />
        <Svg s={18} vb="0 0 18 18" className="pointer-events-none absolute left-0 top-0 hidden peer-checked:block">
          <path d="M4.500 9.500l3.200 3.200L14 6" stroke="#0078f0" strokeWidth="2.200" />
        </Svg>
      </span>
    );
  if (row.text !== undefined)
    return <input id={id} defaultValue={row.text} className="h-5 w-[125px] rounded-[3px] border border-[#333] bg-[#202020] pb-0.5 pl-2 text-[11px] text-[#d0d0d0] outline-none" />;
  if (row.select) return <Dropdown id={id} value={row.select} className="w-[125px]" />;
  if (row.cls)
    return (
      <>
        <Dropdown id={id} value={row.cls} className="flex-1" />
        <span className="flex pl-[6px]">
          {row.tools.split("").map((t, i) => {
            const [name, Icon] = TOOLS[t];
            return <button key={t} type="button" aria-label={name} className={i ? "ml-2.5" : ""}><Icon /></button>;
          })}
        </span>
        <span className="w-[5px]" />
      </>
    );
  if (row.name)
    return (
      <>
        <input id={id} defaultValue={row.name} className="h-5 w-[97px] rounded-[3px] border border-[#333] bg-[#1a1a1a] pb-0.5 pl-2 text-[11px] text-[#c0c0c0] outline-none" />
        <button type="button" aria-label="Localization" className="ml-2"><Svg s={14} vb="0 0 14 14"><path d="M.5 1v13" stroke="#aaa" /><path d="M2 2c3-2 5 1.500 12 0v8c-7 1.500-9-2-12 0z" fill="#6d6d6d" /></Svg></button>
      </>
    );
  if (row.event)
    return (
      <button id={id} type="button" aria-label={`Add ${row.label}`} className="ml-[18px] flex h-[22px] w-[45px] items-center justify-center rounded-[3px] bg-[#262626]">
        <Svg s={14} vb="0 0 14 14"><path d="M7 0v14M0 7h14" stroke="#f0f0f0" strokeWidth="1.600" /></Svg>
      </button>
    );
  return null;
};

const DetailRow = ({ row, id }) => {
  if (row.head)
    return (
      <div className="flex h-[27px] items-center gap-[7px] border-b border-[#0d0d0d] bg-[#121212] pl-[5px]">
        <Tri />
        <h3 className="pb-px text-[11px] font-bold leading-4 text-[#c0c0c0]">{row.head}</h3>
      </div>
    );
  if (row.advanced)
    return (
      <div className="flex h-[27px] items-center gap-[7px] border-b border-[#101010] bg-[#090909] pl-[5px] text-[11px] leading-4 text-[#b0b0b0]">
        <Tri open={false} /><span className="pb-px">{row.label}</span>
      </div>
    );
  return (
    <div className="flex h-[27px] border-b border-[#101010] bg-[#090909]">
      <label htmlFor={id} className="flex w-[181px] shrink-0 items-center gap-[5px] whitespace-nowrap border-r border-[#101010] pb-px pl-[22px] text-[11px] leading-4 text-[#b0b0b0]">
        {row.event && <EventDiamond />}{row.label}
      </label>
      <div className="flex min-w-0 flex-1 items-center pl-[13px]"><Value row={row} id={id} /></div>
      <div className="flex w-[23px] items-center justify-center border-l border-[#101010]">
        {row.undo && <button type="button" aria-label={`Reset ${row.label}`}><UndoIcon /></button>}
      </div>
    </div>
  );
};

const DetailsPanel = () => (
  <aside className="flex w-[420px] shrink-0 flex-col pt-1">
    <Tab label="Details" className="w-40 bg-[#0d0d0d]" icon={<PencilLines />} />
    <div className="flex min-h-0 flex-1 flex-col bg-[#0d0d0d] pb-[18px]">
      <div className="flex h-[38px] shrink-0 items-center pl-2 pr-1.5">
        <SearchBox label="Search details" className="mr-3 flex-1" />
        <button type="button" aria-label="Property matrix">
          <Svg s={16}><path d="M1 1h14v14H1z" fill="#c8c8c8" /><path d="M3 4.500h10M3 8.300h4M9 8.300h4M3 12h4M9 12h4" stroke="#0d0d0d" strokeWidth="1.800" /></Svg>
        </button>
        <button type="button" aria-label="Details options" className="ml-2"><GearIcon /></button>
      </div>
      <div className="flex min-h-0 flex-1">
        <div className="min-w-0 flex-1 overflow-hidden">
          {ROWS.map((row, i) => <DetailRow key={row.head ? `h-${row.head}` : row.label} row={row} id={`prop-${i}`} />)}
          <div className="flex h-[27px] bg-[#090909] pl-[213px] pt-0.5"><span className="h-[22px] w-[43px] rounded-[3px] bg-[#262626]" /></div>
        </div>
        <div className="w-[18px] pl-1 pt-0.5"><div className="h-[530px] w-2 rounded-full bg-[#3d3d3d]" /></div>
      </div>
    </div>
  </aside>
);

/* ---------- status bar ---------- */

const StatusBar = () => (
  <footer className="flex h-7 shrink-0 items-center bg-[#0d0d0d] pt-0.5 text-[13px] leading-4 text-[#c0c0c0]">
    <button type="button" className="flex h-full w-[127px] items-center gap-1 border-r border-[#151515] pl-1.5"><BrowseIcon s={16} />Content Drawer</button>
    <button type="button" className="flex h-full w-[104px] items-center gap-[3px] border-r border-[#151515] pl-[11px]"><NotepadIcon />Output Log</button>
    <button type="button" className="ml-[15px] flex items-center gap-1">
      <Svg s={16}><path d="M.7 1.700h14.600v12.600H.7z" stroke="#b0b0b0" strokeWidth="1.300" /><path d="M3 5l3 2.500L3 10M7.500 11H12" stroke="#d8d8d8" strokeWidth="1.300" /></Svg>
      Cmd
      <span className="ml-px"><Chevron /></span>
    </button>
    <input aria-label="Console command" placeholder="Enter Console Command" className="ml-3 h-[22px] w-[300px] rounded-[3px] border border-[#2c2c2c] bg-[#1a1a1a] px-2 pb-0.5 font-['DejaVu_Sans_Mono',monospace] text-[11px] outline-none placeholder:text-[#5c5c5c]" />
    <button type="button" className="ml-auto flex h-full items-center gap-1.5 border-l border-[#151515] pl-3">
      <Svg s={16}><path d="M0 1h11l2.500 2.500V8H0z" fill="#8c8c8c" /><path d="M3 1h6.500v4.500H3z" fill="#d0d0d0" /><path d="M0 8h13L9 14.500H0z" fill="#c0c0c0" /><path d="M7.500 11.500l3 3L16 9" stroke="#0d0d0d" strokeWidth="4" /><path d="M8 11.500l2.500 2.800L15.500 9" stroke="#d8d8d8" strokeWidth="1.700" /></Svg>
      All Saved
    </button>
    <button type="button" className="ml-[26px] mr-[15px] flex items-center gap-1.5">
      <Svg s={16}><path d="M3 3v10M3 9.500h6c2.500 0 3-2 3-5" stroke="#c8c8c8" strokeWidth="1.400" /><circle cx="3" cy="2.800" r="2.300" fill="#d0d0d0" /><circle cx="3" cy="13" r="2.300" fill="#d0d0d0" /><circle cx="12" cy="3.200" r="2.300" fill="#d0d0d0" /></Svg>
      Revision Control
      <span className="-ml-0.5"><Chevron /></span>
    </button>
  </footer>
);

export default function App() {
  return (
    <div className="flex h-screen min-h-0 flex-col overflow-hidden bg-[#111111] font-['Roboto',sans-serif] text-[#c0c0c0]">
      <TitleBar />
      <Toolbar />
      <div className="flex min-h-0 flex-1 gap-[5px] pb-1.5">
        <div className="flex w-[264px] shrink-0 flex-col"><ComponentsPanel /><MyBlueprintPanel /></div>
        <CenterColumn />
        <DetailsPanel />
      </div>
      <StatusBar />
    </div>
  );
}
